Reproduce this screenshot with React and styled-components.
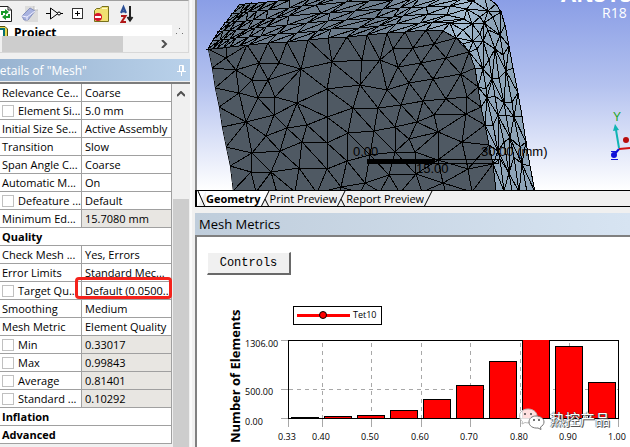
import React, { useState } from 'react'
import styled, { createGlobalStyle, css } from 'styled-components'

const GlobalStyle = createGlobalStyle`
 * {
  box-sizing: border-box;
 }
 body {
  margin: 0;
  background: #f0f0f0;
  color: #000;
  font-family: "Open Sans", "Noto Sans", sans-serif;
  font-size: 11px;
 }
`

const Wrapper = styled.div`
 display: flex;
 height: 100vh;
 overflow: hidden;
`

const Sidebar = styled.aside`
 position: relative;
 flex: none;
 width: 192px;
 display: flex;
 flex-direction: column;
 border-right: 2px solid #fafafa;
`

const Outline = styled.section`
 flex: none;
 margin-right: 1px;
 border-top: 1px solid #a0a0a0;
 border-right: 1px solid #d8d8d8;
 border-bottom: 1px solid #d8d8d8;
`

const Toolbar = styled.div`
 display: flex;
 align-items: center;
 height: 24px;
`

const ToolButton = styled.button`
 display: flex;
 width: ${({ $width }) => $width || 24}px;
 height: 20px;
 padding: 0;
 border: 0;
 background: none;
`

const TreeRow = styled.div`
 display: flex;
 gap: 4px;
 height: 11px;
 padding-right: 4px;
 overflow: hidden;
`

const TreeItem = styled.div`
 flex: 1;
 display: flex;
 gap: 6px;
 background: #fff;
 font-size: 12px;
 font-weight: bold;
 line-height: 16px;
`

const TreeScroll = styled.div`
 display: flex;
 align-items: center;
 height: 16px;
 padding: 0 20px 0 2px;
`

const TreeThumb = styled.div`
 width: 121px;
 height: 16px;
 margin-right: auto;
 background: #cdcdcd;
`

const PanelTitle = styled.h2`
 flex: none;
 display: flex;
 align-items: center;
 justify-content: space-between;
 height: 22px;
 margin: 6px 0 1px;
 padding-right: 3px;
 overflow: hidden;
 background: linear-gradient(90deg, #99b4d1, #b9d1ea);
 color: #fff;
 font-size: 12px;
 font-weight: normal;
 text-indent: -9px;
`

const Details = styled.div`
 flex: 1;
 display: flex;
 min-height: 0;
 overflow: hidden;
 border-top: 2px solid #7c7c7c;
`

const Grid = styled.table`
 flex: none;
 width: 172px;
 table-layout: fixed;
 border-collapse: separate;
 border-spacing: 0;
 align-self: flex-start;
 background: #fff;
`

const cell = css`
 height: 18px;
 padding: 0 0 0 2px;
 overflow: hidden;
 border-right: 1px solid #a0a0a0;
 border-bottom: 1px solid #a0a0a0;
 font-weight: normal;
 line-height: 17px;
 text-align: left;
 white-space: nowrap;
`

const Name = styled.th`
 ${cell}
 width: 82px;
 ${({ $group }) => $group && css`
  font-weight: bold;
 `}
`

const Value = styled.td`
 ${cell}
 padding-left: 3px;
 background: ${({ $readOnly }) => ($readOnly ? '#e8e6e2' : '#fff')};
`

const CheckLabel = styled.label`
 display: flex;
 align-items: center;
 gap: 4px;
`

const CheckBox = styled.input`
 appearance: none;
 flex: none;
 width: 12px;
 height: 12px;
 margin: 0;
 border: 1px solid #c0c0c0;
 background: #fff;
`

const Highlight = styled.div`
 position: absolute;
 top: 277px;
 left: 75px;
 width: 97px;
 height: 22px;
 border: 3px solid #f5221b;
 border-radius: 4px;
 pointer-events: none;
`

const ScrollBar = styled.div`
 flex: 1;
 display: flex;
 flex-direction: column;
 align-items: center;
 background: #f0f0f0;
`

const ScrollArrow = styled.button`
 width: 16px;
 height: 16px;
 padding: 0;
 border: 0;
 background: none;
`

const ScrollThumb = styled.div`
 flex: 1;
 width: 16px;
 margin-top: 99px;
 background: #cdcdcd;
`

const Main = styled.main`
 flex: 1;
 display: flex;
 flex-direction: column;
 min-width: 0;
 margin-left: 3px;
`

const Viewport = styled.div`
 flex: none;
 height: 190px;
 border-left: 2px solid #8c8c8c;
 background: linear-gradient(#8a9ee6, #b4c2ef 45%, #fff);
`

const Drawing = styled.svg`
 display: block;
 width: 100%;
 height: 100%;
`

const Tabs = styled.nav`
 flex: none;
 display: flex;
 height: 17px;
 overflow: hidden;
 border: solid #000;
 border-width: 1px 0 1px 2px;
`

const Tab = styled.button`
 height: 16px;
 padding: 0;
 border: 0;
 background: ${({ $active }) => ($active ? '#fff' : '#f0f0f0')};
 font-family: inherit;
 font-size: 11px;
 font-weight: ${({ $active }) => ($active ? 'bold' : 'normal')};
 line-height: 16px;
`

const MetricsTitle = styled.h2`
 flex: none;
 height: 22px;
 margin: 6px 0 0;
 padding-left: 4px;
 background: linear-gradient(90deg, #bfcddb, #d7e4f2);
 font-size: 13px;
 font-weight: normal;
 line-height: 23px;
`

const Metrics = styled.section`
 position: relative;
 flex: 1;
 display: flex;
 flex-direction: column;
 align-items: flex-start;
 min-height: 0;
 padding-top: 15px;
 border: solid #808080;
 border-width: 2px 0 0 2px;
 background: #fff;
`

const ControlsButton = styled.button`
 flex: none;
 width: 84px;
 height: 23px;
 margin-left: 10px;
 padding: 0;
 border: solid;
 border-width: 1px 2px 2px 1px;
 border-color: #fff #696969 #696969 #fff;
 background: #f0f0f0;
 font-family: "Liberation Mono", monospace;
 font-size: 12px;
`

const ChartArea = styled.div`
 flex: 1;
 width: 100%;
 min-height: 0;
`

const Watermark = styled.div`
 position: absolute;
 right: 20px;
 bottom: 17px;
 display: flex;
 align-items: center;
 gap: 5px;
 color: #fff;
 font-family: "Noto Sans CJK SC", sans-serif;
 font-size: 15px;
 line-height: 22px;
 text-shadow: 1px 1px 0 #555, 0 0 1px #333, 0 0 1px #333;
`

const ROWS = [
  { name: 'Relevance Ce...', value: 'Coarse' },
  { name: 'Element Si...', value: '5.0 mm', check: true },
  { name: 'Initial Size Se...', value: 'Active Assembly' },
  { name: 'Transition', value: 'Slow' },
  { name: 'Span Angle C...', value: 'Coarse' },
  { name: 'Automatic M...', value: 'On' },
  { name: 'Defeature ...', value: 'Default', check: true },
  { name: 'Minimum Ed...', value: '15.7080 mm', readOnly: true },
  { name: 'Quality', group: true },
  { name: 'Check Mesh ...', value: 'Yes, Errors' },
  { name: 'Error Limits', value: 'Standard Mec...' },
  { name: 'Target Qu...', value: 'Default (0.0500...', check: true },
  { name: 'Smoothing', value: 'Medium' },
  { name: 'Mesh Metric', value: 'Element Quality' },
  { name: 'Min', value: '0.33017', check: true, readOnly: true },
  { name: 'Max', value: '0.99843', check: true, readOnly: true },
  { name: 'Average', value: '0.81401', check: true, readOnly: true },
  { name: 'Standard ...', value: '0.10292', check: true, readOnly: true },
  { name: 'Inflation', group: true },
  { name: 'Advanced', group: true }
]

// outline of the front face, clockwise from the top left corner
const FRONT_EDGE = [
  [208, 49], [226, 47], [247, 45], [268, 43], [287, 42], [308, 40], [328, 38], [347, 37],
  [367, 35], [387, 33], [405, 32], [426, 30], [443, 31], [456, 38], [469, 52], [475, 68],
  [478, 87], [481, 107], [485, 125], [489, 145], [493, 164], [496, 191],
  [472, 192], [446, 193], [422, 192], [400, 193], [380, 192], [360, 193], [340, 192],
  [317, 193], [295, 192], [277, 193], [256, 192], [233, 191],
  [230, 166], [226, 147], [222, 127], [219, 107], [215, 88], [212, 68]
]

const FRONT_NODES = [
  [226, 58], [236, 70], [259, 63], [279, 63], [301, 69], [252, 80], [268, 80], [239, 93],
  [258, 98], [275, 97], [297, 103], [327, 89], [332, 62], [362, 60], [360, 85], [380, 60],
  [393, 49], [398, 67], [387, 90], [409, 83], [353, 108], [378, 108], [401, 105], [434, 44],
  [413, 48], [421, 63], [446, 58], [433, 79], [461, 74], [423, 101], [446, 99], [467, 97],
  [246, 122], [274, 115], [266, 136], [287, 128], [307, 125], [327, 117], [252, 153],
  [280, 151], [302, 142], [327, 143], [251, 172], [271, 172], [299, 168], [327, 169],
  [348, 133], [374, 131], [347, 161], [370, 155], [395, 152], [365, 183], [389, 175],
  [341, 187], [395, 127], [409, 139], [417, 122], [434, 115], [466, 114], [438, 132],
  [462, 142], [415, 152], [438, 160], [416, 174], [468, 169], [443, 183]
]

// each entry joins a node of the front edge to one on the far edge
const SIDE_RAILS = [
  [208, 49, 240, 4], [212, 49, 245, 4], [217, 48, 251, 3], [223, 48, 258, 3], [230, 47, 267, 2],
  [239, 46, 278, 1], [249, 45, 290, 0], [268, 43, 312, -3], [287, 42, 334, -5],
  [308, 40, 356, -7], [328, 38, 378, -8], [347, 37, 400, -9], [367, 35, 419, -10],
  [387, 33, 437, -11], [405, 32, 453, -11], [426, 30, 472, -9],
  [443, 31, 484, -5], [456, 38, 496, 4], [463, 44, 501, 12],
  [469, 52, 505, 25], [475, 68, 509, 46], [478, 87, 513, 68],
  [481, 107, 518, 93], [485, 125, 522, 116], [489, 145, 526, 142], [493, 164, 530, 166],
  [496, 191, 535, 192]
]

const FRACTIONS = [0, 0.2, 0.4, 0.6, 0.8, 1]

const noise = (i, j) => {
  const n = Math.sin(i * 12.9898 + j * 78.233) * 43758.5453
  return n - Math.floor(n) - 0.5
}

const inCircle = (p, [a, b, c]) => {
  const ax = a[0] - p[0]
  const ay = a[1] - p[1]
  const bx = b[0] - p[0]
  const by = b[1] - p[1]
  const cx = c[0] - p[0]
  const cy = c[1] - p[1]
  const det = (ax * ax + ay * ay) * (bx * cy - cx * by)
    - (bx * bx + by * by) * (ax * cy - cx * ay)
    + (cx * cx + cy * cy) * (ax * by - bx * ay)
  const turn = (b[0] - a[0]) * (c[1] - a[1]) - (c[0] - a[0]) * (b[1] - a[1])
  return turn > 0 ? det > 0 : det < 0
}

const triangulate = (points) => {
  const outer = [[-3000, -3000], [4000, -3000], [300, 5000]]
  let triangles = [outer]
  points.forEach((p) => {
    const bad = triangles.filter((t) => inCircle(p, t))
    const edges = bad.flatMap(([a, b, c]) => [[a, b], [b, c], [c, a]])
    const hull = edges.filter(([a, b], i) => !edges.some(([c, d], j) => (
      i !== j && ((a === c && b === d) || (a === d && b === c))
    )))
    triangles = triangles.filter((t) => !bad.includes(t)).concat(hull.map(([a, b]) => [a, b, p]))
  })
  return triangles.filter((t) => !t.some((p) => outer.includes(p)))
}

const toPath = (points) => `M${points.map((p) => p.join(' ')).join('L')}Z`

const frontMesh = triangulate([...FRONT_EDGE, ...FRONT_NODES]).map(toPath).join('')

const sideNodes = SIDE_RAILS.map(([x1, y1, x2, y2], i) => FRACTIONS.map((f, j) => {
  const inner = j > 0 && j < FRACTIONS.length - 1
  const next = SIDE_RAILS[i + 1] || SIDE_RAILS[i]
  const shift = inner ? noise(i, j) * 0.8 : 0
  return [
    Math.round(x1 + (x2 - x1) * f + (next[0] - x1) * shift),
    Math.round(y1 + (y2 - y1) * f + (next[1] - y1) * shift)
  ]
}))

const sideMesh = sideNodes.slice(1).flatMap((rail, i) => rail.slice(1).flatMap((p, j) => {
  const a = sideNodes[i][j]
  const b = sideNodes[i][j + 1]
  const c = rail[j]
  return i < 16 || (i + j) % 2 ? [toPath([a, c, p]), toPath([a, b, p])] : [toPath([a, b, c]), toPath([b, p, c])]
})).join('')

const sideOutline = toPath([
  ...SIDE_RAILS.map(([x, y]) => [x, y]),
  ...[...SIDE_RAILS].reverse().map(([, , x, y]) => [x, y])
])

const Model = () => (
  <Drawing viewBox="197 0 433 190" preserveAspectRatio="xMinYMin slice" role="img" aria-label="Mesh">
    <defs>
      <linearGradient id="side" gradientUnits="userSpaceOnUse" x1="380" y1="0" x2="490" y2="30">
        <stop offset="0" stopColor="#6b7b8b" />
        <stop offset="0.75" stopColor="#a2bad0" />
        <stop offset="1" stopColor="#8ea4b8" />
      </linearGradient>
      <clipPath id="front"><path d={toPath(FRONT_EDGE)} /></clipPath>
    </defs>
    <path d={sideOutline} fill="url(#side)" />
    <path d={toPath(FRONT_EDGE)} fill="#4f5963" />
    <g fill="none" stroke="#000" shapeRendering="crispEdges">
      <path d={sideMesh} />
      <path d={frontMesh} clipPath="url(#front)" />
    </g>
    <g shapeRendering="crispEdges">
      <rect x="367" y="159" width="67" height="5" />
      <rect x="434.5" y="159.5" width="64" height="4" fill="none" stroke="#000" />
    </g>
    <g fontFamily="Liberation Sans, sans-serif" fontSize="13">
      <text x="353" y="156">0.00</text>
      <text x="416" y="173">15.00</text>
      <text x="481" y="156">30.00 (mm)</text>
    </g>
    <g fill="#fff" fontFamily="Open Sans, sans-serif">
      <text x="561" y="2" fontSize="22" fontWeight="bold">ANSYS</text>
      <text x="602" y="18" fontSize="14">R18</text>
    </g>
    <text x="613" y="121" fontSize="12" fill="#1ea51e" fontFamily="Liberation Sans, sans-serif">Y</text>
    <path d="M619 148L616 130" stroke="#10b4b4" strokeWidth="2" />
    <path d="M613 131L615 124L619 130Z" fill="#10b4b4" />
    <path d="M619 149L630 148" stroke="#d01010" strokeWidth="2" />
    <circle cx="626" cy="140" r="3" fill="#b80c0c" />
    <path d="M619 149L613 156" stroke="#1010d8" strokeWidth="2" />
    <circle cx="614" cy="155" r="3" fill="#1010d8" />
    <path d="M611 151.500H618M611 159.500H618" stroke="#1010d8" />
  </Drawing>
)

const BARS = [417, 416, 415, 410, 399, 385, 361, 340, 346, 382]
const X_TICKS = [
  [288, '0.33'], [322, '0.40'], [371, '0.50'], [421, '0.60'],
  [470, '0.70'], [520, '0.80'], [569, '0.90'], [618, '1.00']
]
const Y_TICKS = [[340, '1306.00', 347], [389, '500.00', 395], [418, '0.00', 425]]

const Chart = () => (
  <Drawing viewBox="197 275 433 172" preserveAspectRatio="xMinYMin meet" role="img" aria-label="Number of Elements">
    <g shapeRendering="crispEdges" fill="none">
      <g stroke="#a8a8a8">
        {X_TICKS.map(([x]) => <path key={x} d={`M${x + 0.5} 419V427`} />)}
        {Y_TICKS.map(([y]) => <path key={y} d={`M281 ${y + 0.5}H288`} />)}
        <g strokeDasharray="4 4">
          {X_TICKS.slice(1, -1).map(([x]) => <path key={x} d={`M${x + 0.5} 343V418`} />)}
          <path d="M289 389.5H618" />
        </g>
      </g>
      <rect x="288.5" y="340.5" width="330" height="78" stroke="#000" />
      {BARS.map((top, i) => (
        <rect key={top} x={291.5 + i * 33} y={top + 0.5} width="27" height={418 - top} fill="#f00" stroke="#000" />
      ))}
      <path d="M523 340.5H549" stroke="#f00" />
      <rect x="293.500" y="306.500" width="88" height="18" fill="#fff" stroke="#000" />
      <rect x="297" y="314" width="53" height="3" fill="#f00" />
    </g>
    <circle cx="323" cy="315" r="3.5" fill="#f00" stroke="#000" />
    <g fontFamily="Open Sans, sans-serif" fontSize="9">
      <text x="353" y="318">Tet10</text>
      {Y_TICKS.map(([y, label, base]) => <text key={y} x="245" y={base}>{label}</text>)}
      {X_TICKS.map(([x, label]) => <text key={x} x={x - 1} y="440" textAnchor="middle">{label}</text>)}
    </g>
    <text transform="translate(240 443) rotate(-90)" fontFamily="Open Sans, sans-serif" fontSize="13" fontWeight="bold">
      Number of Elements
    </text>
  </Drawing>
)

const ToolIcons = () => (
  <Toolbar>
    <ToolButton $width={20} aria-label="Refresh">
      <svg width="14" height="20" viewBox="0 0 14 20">
        <path d="M-3 3.500H8L11.500 7V18.500H-3Z" fill="#fff" stroke="#222" />
        <path d="M8 3.500V7H11.500" fill="none" stroke="#222" />
        <path d="M2 12V9H6M9 11V14H5" fill="none" stroke="#159a28" strokeWidth="2" />
        <path d="M5 6L9 9L5 12ZM6 11L2 14L6 17Z" fill="#159a28" />
      </svg>
    </ToolButton>
    <ToolButton $width={26} aria-label="Clear">
      <svg width="20" height="20" viewBox="0 0 20 20">
        <path d="M5 3H14L18 7V19H5Z" fill="#dcdcdc" />
        <path d="M14 3V7H18" fill="#fff" stroke="#bbb" />
        <path d="M2 13L10 5L15 8L8 17L4 17Z" fill="#a9b3e0" stroke="#8590bd" />
        <path d="M2 13L7 14L15 8M7 14V17" fill="none" stroke="#eef" />
      </svg>
    </ToolButton>
    <ToolButton $width={26} aria-label="Filter">
      <svg width="18" height="20" viewBox="0 0 18 20" fill="none" stroke="#000">
        <path d="M0 10.500H4M4.500 5V16L12 10.500Z" />
        <circle cx="13" cy="10.500" r="1.500" fill="#fff" />
        <path d="M14.500 10.500H17" />
      </svg>
    </ToolButton>
    <ToolButton $width={21} aria-label="Expand">
      <svg width="12" height="20" viewBox="0 0 12 20" fill="none" stroke="#333">
        <rect x="0.500" y="5.500" width="10" height="10" fill="#fff" />
        <path d="M3 10.500H8M5.500 8V13" stroke="#000" />
      </svg>
    </ToolButton>
    <ToolButton $width={27} aria-label="Hide">
      <svg width="17" height="20" viewBox="0 0 17 20">
        <path d="M1.500 18.500V7.500L3.500 5.500H7L9 3.500H15.500V18.500Z" fill="#f0e070" stroke="#77701c" />
        <path d="M9 5.500H14" stroke="#fffbc4" />
        <circle cx="5" cy="14" r="4" fill="#d4142c" />
        <rect x="2" y="13" width="6" height="2" fill="#fff" />
      </svg>
    </ToolButton>
    <ToolButton aria-label="Sort">
      <svg width="14" height="20" viewBox="0 0 14 20" fill="none" strokeWidth="2">
        <path d="M1 10L3.500 4L6 10M2 8.500H5" stroke="#2b4f96" />
        <path d="M1 13H5.500L1.500 19H6" stroke="#b01818" />
        <path d="M10 3V17M7.500 14L10 17.500L12.500 14" stroke="#222" />
      </svg>
    </ToolButton>
  </Toolbar>
)

const Slant = ({ width = 9, d, fill = '#f0f0f0' }) => (
  <svg width={width} height="16" viewBox={`0 0 ${width} 16`} fill="none" stroke="#000" aria-hidden="true">
    <path d={`M0 0H${width}L0 16Z`} fill={fill} stroke="none" />
    <path d={d} />
  </svg>
)

const App = () => {
  const [checked, setChecked] = useState({})

  const toggle = (name) => setChecked({ ...checked, [name]: !checked[name] })

  return (
    <Wrapper>
      <GlobalStyle />
      <Sidebar>
        <Outline>
          <ToolIcons />
          <TreeRow>
            <TreeItem>
              <svg width="8" height="14" viewBox="0 0 8 14">
                <path d="M-2 1.500H5L7.500 4V14H-2Z" fill="#e4d850" stroke="#55500c" />
                <rect x="-2" y="4" width="6" height="8" fill="#fff" stroke="#067070" strokeWidth="2" />
              </svg>
              <span>Project</span>
            </TreeItem>
            <svg width="8" height="11" viewBox="0 0 8 11" fill="#707070">
              <path d="M3 3H4V4H3ZM0 8H1V9H0ZM6 8H7V9H6Z" />
            </svg>
          </TreeRow>
          <TreeScroll>
            <TreeThumb />
            <svg width="7" height="8" viewBox="0 0 7 8" fill="none" stroke="#505050" strokeWidth="2">
              <path d="M1 0L5 4L1 8" />
            </svg>
          </TreeScroll>
        </Outline>
        <PanelTitle>
          <span>Details of "Mesh"</span>
          <svg width="11" height="12" viewBox="0 0 11 12" fill="none" stroke="#fff">
            <path d="M3.500 7V1.500H7.500V7M6.500 1V7M1 7.500H10M5.500 8V12" />
          </svg>
        </PanelTitle>
        <Details>
          <Grid>
            <tbody>
              {ROWS.map(({ name, value, check, readOnly, group }) => (
                <tr key={name}>
                  <Name scope="row" $group={group} colSpan={group ? 2 : 1}>
                    {check ? (
                      <CheckLabel>
                        <CheckBox type="checkbox" checked={!!checked[name]} onChange={() => toggle(name)} />
                        {name}
                      </CheckLabel>
                    ) : name}
                  </Name>
                  {!group && <Value $readOnly={readOnly}>{value}</Value>}
                </tr>
              ))}
            </tbody>
          </Grid>
          <ScrollBar>
            <ScrollArrow aria-label="Scroll up">
              <svg width="8" height="6" viewBox="0 0 8 6" fill="none" stroke="#505050" strokeWidth="2">
                <path d="M0 5L4 1L8 5" />
              </svg>
            </ScrollArrow>
            <ScrollThumb />
          </ScrollBar>
        </Details>
        <Highlight />
      </Sidebar>
      <Main>
        <Viewport>
          <Model />
        </Viewport>
        <Tabs>
          <Slant fill="#fff" d="M1 0L8 16" />
          <Tab $active>Geometry</Tab>
          <Slant fill="#fff" d="M0 16L8 0M4 8L8 16" />
          <Tab>Print Preview</Tab>
          <Slant d="M0 16L8 0M4 8L8 16" />
          <Tab>Report Preview</Tab>
          <Slant d="M0 16L8 0" />
        </Tabs>
        <MetricsTitle>Mesh Metrics</MetricsTitle>
        <Metrics>
          <ControlsButton>Controls</ControlsButton>
          <ChartArea>
            <Chart />
          </ChartArea>
          <Watermark>
            <svg width="26" height="22" viewBox="0 0 26 22">
              <path d="M9 1C4 1 0.500 4 0.500 8C0.500 10 1.500 12 3.500 13.500L3 16L6 14.500C11 16 18 13 18 8C18 4 14 1 9 1Z" fill="#fff" fillOpacity="0.88" stroke="#bbb" />
              <path d="M17 8C13 8 10 10.500 10 14C10 18 14 20.500 19 20L22 21.500L21.500 19C23.500 18 25 16 25 14C25 10.500 21.500 8 17 8Z" fill="#fff" fillOpacity="0.9" stroke="#777" />
              <g fill="#444">
                <circle cx="6" cy="6" r="1" />
                <circle cx="12" cy="6" r="1" />
                <circle cx="15" cy="12" r="1" />
                <circle cx="20" cy="12" r="1" />
              </g>
            </svg>
            <span>热控产品</span>
          </Watermark>
        </Metrics>
      </Main>
    </Wrapper>
  )
}

export default App
